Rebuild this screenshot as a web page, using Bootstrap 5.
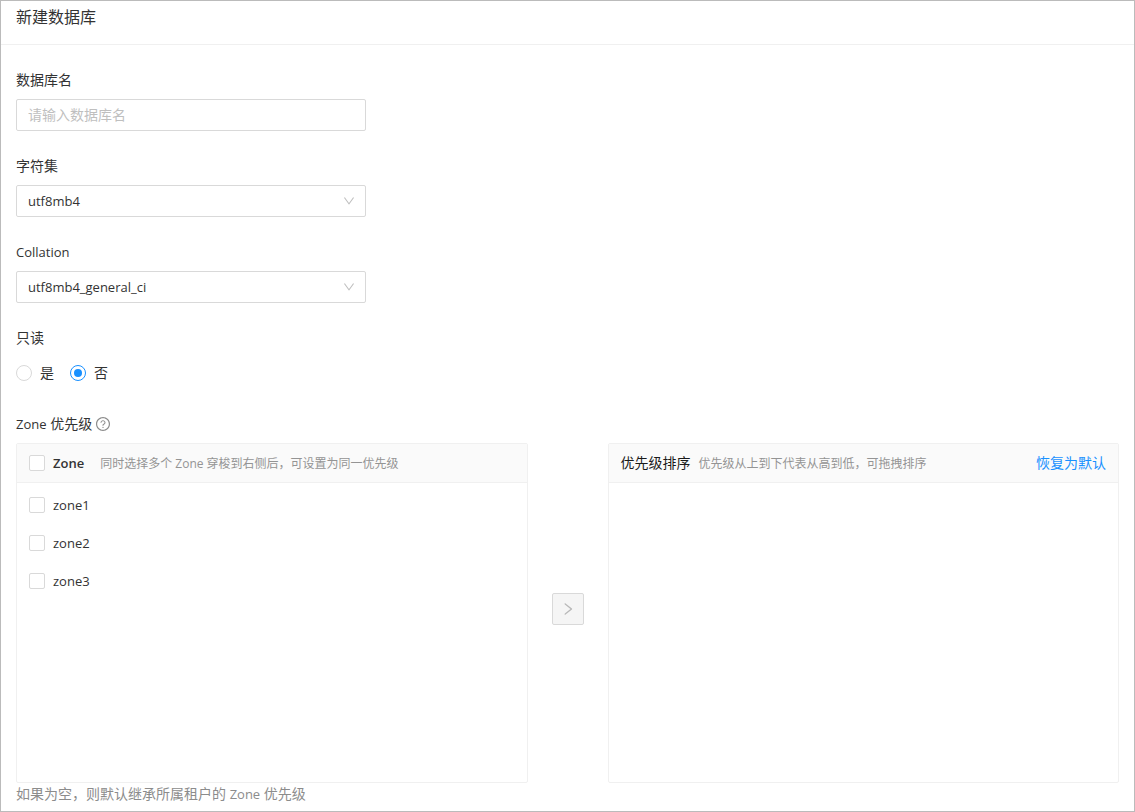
<!DOCTYPE html>
<html lang="zh-CN">
<head>
<meta charset="utf-8">
<meta name="viewport" content="width=device-width, initial-scale=1">
<title>新建数据库</title>
<link href="https://cdn.jsdelivr.net/npm/bootstrap@5.3.0/dist/css/bootstrap.min.css" rel="stylesheet">
<style>
  body {
    font-family: "Open Sans", "Noto Sans CJK SC", sans-serif;
    font-size: 14px;
    line-height: 22px;
    color: #333;
  }
  .page-frame { border: 1px solid #bbb; }
  .page-head { height: 44px; padding: 4px 15px; border-bottom: 1px solid #f0f0f0; }
  .page-title { font-size: 16px; line-height: 24px; font-weight: 400; margin: 0; }
  .page-form { padding: 24px 15px 6px; }
  .field { max-width: 350px; margin-bottom: 24px; }
  .field-label { display: block; margin-bottom: 8px; }
  .latin { font-size: 13px; }
  .form-control, .form-select {
    height: 32px;
    padding: 4px 11px;
    font-size: 14px;
    line-height: 22px;
    color: #333;
    border: 1px solid #d9d9d9;
    border-radius: 2px;
  }
  .form-control { padding: 3px 11px 5px; }
  .form-control::placeholder { color: #bfbfbf; }
  .form-select {
    font-size: 13px;
    background-image: url("data:image/svg+xml,%3Csvg xmlns='http://www.w3.org/2000/svg' viewBox='64 64 896 896' fill='%23bfbfbf'%3E%3Cpath d='M884 256h-75c-5.1 0-9.9 2.5-12.9 6.6L512 654.2 227.9 262.6c-3-4.1-7.8-6.6-12.9-6.6h-75c-6.5 0-10.3 7.4-6.5 12.7l352.6 486.1c12.8 17.6 39 17.6 51.7 0l352.6-486.1c3.9-5.3.1-12.7-6.4-12.7z'/%3E%3C/svg%3E");
    background-size: 12px 12px;
    background-position: right 10px center;
  }
  .form-check-input {
    flex: none;
    width: 16px;
    height: 16px;
    margin: 0;
    border: 1px solid #d9d9d9;
  }
  .form-check-input[type=checkbox] { border-radius: 2px; }
  .form-check-input[type=radio]:checked {
    border-color: #1890ff;
    background: #fff url("data:image/svg+xml,%3Csvg xmlns='http://www.w3.org/2000/svg' viewBox='0 0 14 14'%3E%3Ccircle cx='7' cy='7' r='4' fill='%231890ff'/%3E%3C/svg%3E") center / 14px 14px no-repeat;
  }
  .radio-row { height: 32px; }
  .help-icon { color: #8c8c8c; }
  .zone-label { height: 22px; margin-bottom: 8px; }
  .transfer-panel { height: 340px; border: 1px solid #f0f0f0; border-radius: 2px; }
  .panel-head { height: 39px; padding: 0 12px; background: #fafafa; border-bottom: 1px solid #f0f0f0; }
  .panel-name { color: #1a1a1a; }
  .panel-note { padding-top: 2px; font-size: 12px; color: #949494; }
  .zone-row { height: 38px; padding: 0 12px; }
  .zone-list { padding-top: 3px; }
  .move-btn {
    width: 32px;
    height: 32px;
    margin-bottom: 8px;
    padding: 0;
    border-radius: 2px;
  }
  .move-btn:disabled { opacity: 1; background: #f5f5f5; border-color: #d9d9d9; color: #b8b8b8; }
  .reset-link { color: #1890ff; }
  .form-help { color: #8c8c8c; }
</style>
</head>
<body>
<div class="page-frame min-vh-100">
  <header class="page-head">
    <h1 class="page-title">新建数据库</h1>
  </header>
  <form class="page-form">
    <div class="field">
      <label class="field-label" for="dbName">数据库名</label>
      <input class="form-control" id="dbName" type="text" placeholder="请输入数据库名">
    </div>
    <div class="field">
      <label class="field-label" for="charset">字符集</label>
      <select class="form-select" id="charset"><option>utf8mb4</option></select>
    </div>
    <div class="field">
      <label class="field-label latin" for="collation">Collation</label>
      <select class="form-select" id="collation"><option>utf8mb4_general_ci</option></select>
    </div>
    <div class="field" role="radiogroup" aria-labelledby="readonlyLabel">
      <span class="field-label" id="readonlyLabel">只读</span>
      <div class="radio-row d-flex align-items-center gap-3">
        <label class="d-flex align-items-center gap-2"><input class="form-check-input" type="radio" name="readonly">是</label>
        <label class="d-flex align-items-center gap-2"><input class="form-check-input" type="radio" name="readonly" checked>否</label>
      </div>
    </div>
    <div class="zone-label d-flex align-items-center gap-1">
      <span><span class="latin">Zone</span> 优先级</span>
      <svg class="help-icon" width="14" height="14" viewBox="64 64 896 896" fill="currentColor" aria-hidden="true"><path d="M512 64C264.6 64 64 264.6 64 512s200.6 448 448 448 448-200.6 448-448S759.4 64 512 64zm0 820c-205.4 0-372-166.6-372-372s166.6-372 372-372 372 166.6 372 372-166.6 372-372 372z"/><path d="M623.6 316.7C593.6 290.4 554 276 512 276s-81.6 14.5-111.6 40.7C369.2 344 352 380.7 352 420v7.6c0 4.4 3.6 8 8 8h48c4.4 0 8-3.6 8-8V420c0-44.1 43.1-80 96-80s96 35.9 96 80c0 31.1-22 59.6-56.1 72.7-21.2 8.1-39.2 22.3-52.1 40.9-13.1 19-19.9 41.8-19.9 64.9V620c0 4.4 3.6 8 8 8h48c4.4 0 8-3.6 8-8v-22.7a48.3 48.3 0 0130.9-44.8c59-22.7 97.1-74.7 97.1-132.5.1-39.3-17.1-76-48.3-103.3zM472 732a40 40 0 1080 0 40 40 0 10-80 0z"/></svg>
    </div>
    <div class="d-flex align-items-center gap-4">
      <section class="transfer-panel flex-fill w-50">
        <div class="panel-head d-flex align-items-center gap-3">
          <label class="d-flex align-items-center gap-2 latin fw-semibold"><input class="form-check-input" type="checkbox">Zone</label>
          <span class="panel-note">同时选择多个 Zone 穿梭到右侧后，可设置为同一优先级</span>
        </div>
        <div class="zone-list">
          <label class="zone-row latin d-flex align-items-center gap-2"><input class="form-check-input" type="checkbox">zone1</label>
          <label class="zone-row latin d-flex align-items-center gap-2"><input class="form-check-input" type="checkbox">zone2</label>
          <label class="zone-row latin d-flex align-items-center gap-2"><input class="form-check-input" type="checkbox">zone3</label>
        </div>
      </section>
      <button class="move-btn btn d-flex align-items-center justify-content-center flex-shrink-0" type="button" disabled aria-label="移到右侧">
        <svg width="14" height="14" viewBox="64 64 896 896" fill="currentColor" aria-hidden="true"><path d="M765.7 486.8L314.9 134.7A7.97 7.97 0 00302 141v77.3c0 4.9 2.3 9.6 6.1 12.6l360 281.1-360 281.1c-3.9 3-6.1 7.7-6.1 12.6V883c0 6.7 7.7 10.4 12.9 6.3l450.8-352.1a31.96 31.96 0 000-50.4z"/></svg>
      </button>
      <section class="transfer-panel flex-fill w-50">
        <div class="panel-head d-flex align-items-center gap-2">
          <span class="panel-name">优先级排序</span>
          <span class="panel-note">优先级从上到下代表从高到低，可拖拽排序</span>
          <a class="reset-link ms-auto text-decoration-none" href="#">恢复为默认</a>
        </div>
      </section>
    </div>
    <div class="form-help">如果为空，则默认继承所属租户的 <span class="latin">Zone</span> 优先级</div>
  </form>
</div>
<script src="https://cdn.jsdelivr.net/npm/bootstrap@5.3.0/dist/js/bootstrap.bundle.min.js"></script>
</body>
</html>
